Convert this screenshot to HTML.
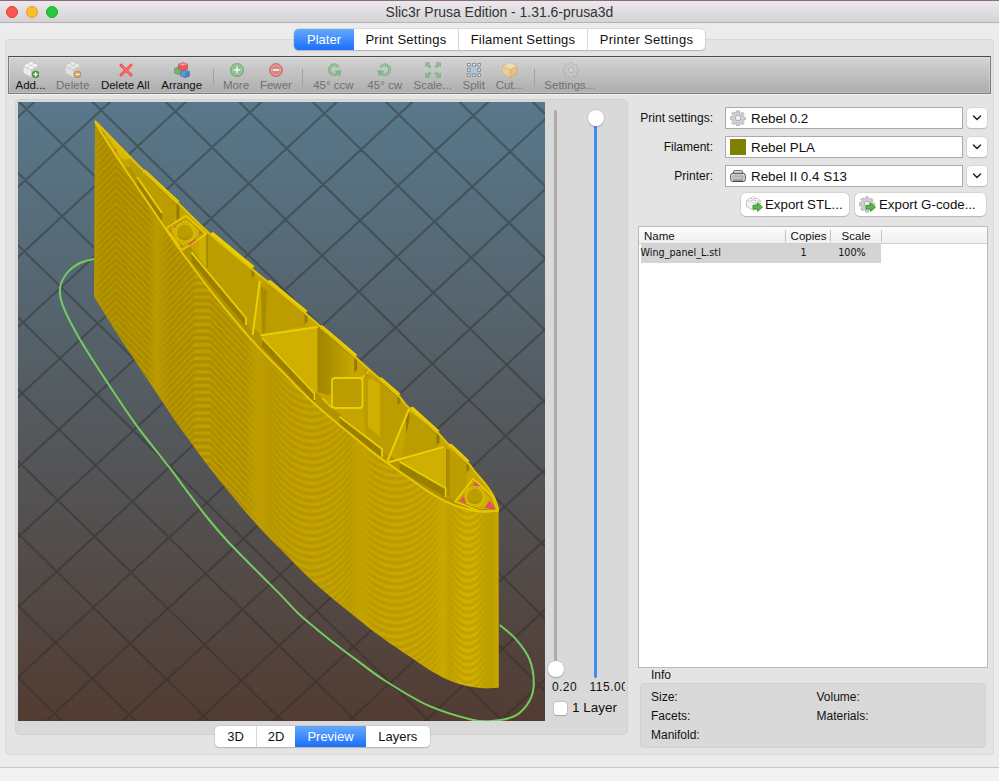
<!DOCTYPE html>
<html>
<head>
<meta charset="utf-8">
<title>Slic3r Prusa Edition - 1.31.6-prusa3d</title>
<style>
*{box-sizing:border-box;margin:0;padding:0}
html,body{width:999px;height:781px;overflow:hidden;background:#ececec;font-family:"Liberation Sans",sans-serif;color:#1a1a1a}
.abs{position:absolute}
#win{position:relative;width:999px;height:781px;background:#ececec;overflow:hidden}
#titlebar{left:0;top:0;width:999px;height:23px;background:linear-gradient(#ebe9eb,#d5d3d5);border-bottom:1px solid #b4b2b4;border-top:1px solid #8a6a7a}
#title{left:0;top:4px;width:999px;text-align:center;font-size:13.95px;color:#333}
.tl{width:12px;height:12px;border-radius:50%;top:6px}
#groupbox{left:5px;top:39px;width:989px;height:716px;background:#e4e4e4;border:1px solid #dadada;border-radius:4px}
#tabs{left:294px;top:29px;width:411px;height:21px;background:#fff;border-radius:4.5px;box-shadow:0 0 0 0.5px #c4c4c4,0 1px 1px rgba(0,0,0,.25);font-size:13px}
.tab{top:0;height:21px;line-height:21px;text-align:center;border-left:1px solid #d9d9d9;color:#111}
#toolbar{left:8px;top:56px;width:983px;height:38px;background:linear-gradient(#d4d4d4,#adadad);border:1px solid #7c7c7c;border-top-color:#4a4a4a;box-shadow:0 1px 0 #f3f3f3, inset 0 0 0 1px rgba(255,255,255,.25)}
.tbl{font-size:11.5px;line-height:14px;color:#111;text-align:center;white-space:nowrap}
.tbl.dis{color:#707070}
.sep{width:1px;height:16px;background:#a0a0a0}
#canvas{left:18px;top:102px;width:527px;height:619px;background:#555;overflow:hidden}

#leftshade{left:15px;top:99px;width:613px;height:636px;background:#d9d9d9;border:1px solid #d1d1d1;border-radius:5px}
.lbl{font-size:12px;line-height:14px;color:#111;text-align:right;white-space:nowrap}
.combo{background:#fff;border:1px solid #a9a9a9;height:22px;font-size:13.4px;line-height:20px;color:#111}
.dd{width:20px;height:20px;background:#fff;border-radius:4px;box-shadow:0 0 0 0.5px #c8c8c8,0 1px 1px rgba(0,0,0,.25)}
/*b*/.btn{height:23px;background:#fff;border-radius:5px;box-shadow:0 0 0 0.5px #c4c4c4,0 1px 1px rgba(0,0,0,.25);font-size:13.3px;line-height:24.5px;color:#111;white-space:nowrap}
#list{left:638px;top:226px;width:350px;height:442px;background:#fff;border:1px solid #b9b9b9}
#info{left:640px;top:683px;width:346px;height:65px;background:#d9d9d9;border-radius:4px;border:1px solid #d2d2d2}
.il{font-size:12px;line-height:14px;color:#111;white-space:nowrap}
.hd{font-size:11.500px;color:#111;white-space:nowrap;line-height:14px}
.rw{font-family:"DejaVu Sans Condensed","DejaVu Sans","Liberation Sans",sans-serif;font-size:10.700px;color:#111;white-space:nowrap;line-height:14px}
.knob{width:16px;height:16px;border-radius:50%;background:#fff;box-shadow:0 0 0 0.500px #bdbdbd,0 1px 1.500px rgba(0,0,0,.3)}
#status{left:0;top:767px;width:999px;height:14px;background:#f2f2f2;border-top:1px solid #c6c6c6}
#viewtabs{left:215px;top:726px;width:214.5px;height:21px;background:#fff;border-radius:4.5px;box-shadow:0 0 0 0.5px #c0c0c0,0 1px 1px rgba(0,0,0,.25);font-size:13px}
.vt{top:0;height:21px;line-height:21px;text-align:center;border-left:1px solid #d9d9d9;color:#111}
</style>
</head>
<body>
<div id="win">
  <div id="titlebar" class="abs"></div>
  <div class="abs tl" style="left:6px;background:#fc5753;border:0.5px solid #df3e3a"></div>
  <div class="abs tl" style="left:26px;background:#fdbc2e;border:0.5px solid #de9f1e"></div>
  <div class="abs tl" style="left:46px;background:#28c840;border:0.5px solid #1aab29"></div>
  <div id="title" class="abs">Slic3r Prusa Edition - 1.31.6-prusa3d</div>

  <div id="groupbox" class="abs"></div>

  <div id="tabs" class="abs">
    <div class="abs tab" style="left:0;width:60px;background:linear-gradient(#65a9fb,#1a6ffb);color:#fff;border-left:none;border-radius:4.5px 0 0 4.5px">Plater</div>
    <div class="abs tab" style="left:60px;width:104px;border-left:none;letter-spacing:0.28px">Print Settings</div>
    <div class="abs tab" style="left:164px;width:129px;letter-spacing:0.25px">Filament Settings</div>
    <div class="abs tab" style="left:293px;width:118px;letter-spacing:0.28px">Printer Settings</div>
  </div>

  <div id="toolbar" class="abs"></div>
  <!--TOOLBAR-ITEMS-START--><svg class="abs" style="left:23.0px;top:62px" width="16" height="16" viewBox="0 0 16 16"><g opacity="1.0"><path d="M0.5 4.6 L8 1 L15.3 4.6 L15.3 11 L8 14.8 L0.5 11 Z" fill="#ededed" stroke="#b4b4b4" stroke-width="0.6"/><path d="M8 8.4 L15.3 4.6 L15.3 11 L8 14.8 Z" fill="#c8c8c8"/><path d="M0.5 4.6 L8 8.4 L8 14.8 L0.5 11 Z" fill="#ebebeb"/><path d="M0.5 4.6 L8 8.4 L15.3 4.6" stroke="#cfcfcf" stroke-width="0.5" fill="none"/><path d="M5.7 2.8 v-1.3 a2.3 1.25 0 0 1 4.6 0 v1.3 a2.3 1.25 0 0 1 -4.6 0Z" fill="#cdcdcd"/><ellipse cx="8" cy="1.4999999999999998" rx="2.3" ry="1.25" fill="#fcfcfc"/><path d="M1.9000000000000004 4.8 v-1.3 a2.3 1.25 0 0 1 4.6 0 v1.3 a2.3 1.25 0 0 1 -4.6 0Z" fill="#cdcdcd"/><ellipse cx="4.2" cy="3.5" rx="2.3" ry="1.25" fill="#fcfcfc"/><path d="M9.5 4.8 v-1.3 a2.3 1.25 0 0 1 4.6 0 v1.3 a2.3 1.25 0 0 1 -4.6 0Z" fill="#cdcdcd"/><ellipse cx="11.8" cy="3.5" rx="2.3" ry="1.25" fill="#fcfcfc"/><path d="M5.7 6.8 v-1.3 a2.3 1.25 0 0 1 4.6 0 v1.3 a2.3 1.25 0 0 1 -4.6 0Z" fill="#cdcdcd"/><ellipse cx="8" cy="5.5" rx="2.3" ry="1.25" fill="#fcfcfc"/></g><circle cx="12.6" cy="12.4" r="3.4" fill="#45a835" stroke="#2c7d22" stroke-width="0.6"/><path d="M12.6 10.3V14.5M10.5 12.4H14.7" stroke="#fff" stroke-width="1.4"/></svg>
<div class="abs tbl" style="left:-9.5px;width:80px;top:78px">Add...</div>
<svg class="abs" style="left:65.0px;top:62px" width="16" height="16" viewBox="0 0 16 16"><g opacity="0.7"><path d="M0.5 4.6 L8 1 L15.3 4.6 L15.3 11 L8 14.8 L0.5 11 Z" fill="#ededed" stroke="#b4b4b4" stroke-width="0.6"/><path d="M8 8.4 L15.3 4.6 L15.3 11 L8 14.8 Z" fill="#c8c8c8"/><path d="M0.5 4.6 L8 8.4 L8 14.8 L0.5 11 Z" fill="#ebebeb"/><path d="M0.5 4.6 L8 8.4 L15.3 4.6" stroke="#cfcfcf" stroke-width="0.5" fill="none"/><path d="M5.7 2.8 v-1.3 a2.3 1.25 0 0 1 4.6 0 v1.3 a2.3 1.25 0 0 1 -4.6 0Z" fill="#cdcdcd"/><ellipse cx="8" cy="1.4999999999999998" rx="2.3" ry="1.25" fill="#fcfcfc"/><path d="M1.9000000000000004 4.8 v-1.3 a2.3 1.25 0 0 1 4.6 0 v1.3 a2.3 1.25 0 0 1 -4.6 0Z" fill="#cdcdcd"/><ellipse cx="4.2" cy="3.5" rx="2.3" ry="1.25" fill="#fcfcfc"/><path d="M9.5 4.8 v-1.3 a2.3 1.25 0 0 1 4.6 0 v1.3 a2.3 1.25 0 0 1 -4.6 0Z" fill="#cdcdcd"/><ellipse cx="11.8" cy="3.5" rx="2.3" ry="1.25" fill="#fcfcfc"/><path d="M5.7 6.8 v-1.3 a2.3 1.25 0 0 1 4.6 0 v1.3 a2.3 1.25 0 0 1 -4.6 0Z" fill="#cdcdcd"/><ellipse cx="8" cy="5.5" rx="2.3" ry="1.25" fill="#fcfcfc"/></g><g opacity="0.75"><circle cx="12.6" cy="12.4" r="3.4" fill="#e8913c" stroke="#c06a1c" stroke-width="0.6"/><path d="M10.5 12.4H14.7" stroke="#fff" stroke-width="1.4"/></g></svg>
<div class="abs tbl dis" style="left:32.7px;width:80px;top:78px">Delete</div>
<svg class="abs" style="left:117.7px;top:62px" width="16" height="16" viewBox="0 0 16 16"><path d="M3 3.2 L13 13 M13 3.2 L3 13" stroke="#f04848" stroke-width="3" stroke-linecap="round"/><path d="M3 3.2 L13 13 M13 3.2 L3 13" stroke="#ff7a7a" stroke-width="1.1" stroke-linecap="round"/></svg>
<div class="abs tbl" style="left:85.2px;width:80px;top:78px">Delete All</div>
<svg class="abs" style="left:173.8px;top:62px" width="16" height="16" viewBox="0 0 16 16"><g stroke-width="0.6"><path d="M0.5 6.5 L4 5 L8 6.5 L8 11 L4.5 12.5 L0.5 11 Z" fill="#74b870" stroke="#4b8f47"/><path d="M6.5 9.5 L11 8 L15.5 9.5 L15.5 14 L11 15.7 L6.5 14 Z" fill="#5d95d6" stroke="#3a6fb0"/><path d="M11 11.3 L15.5 9.5 L15.5 14 L11 15.7 Z" fill="#4a80c4"/><path d="M4.5 2.2 L9 0.6 L13.5 2.2 L13.5 7 L9 8.8 L4.5 7 Z" fill="#ee5a5a" stroke="#c03a3a"/><path d="M4.5 2.2 L9 4 L13.5 2.2 L9 0.6 Z" fill="#f78a8a"/><ellipse cx="9" cy="2.3" rx="2" ry="0.9" fill="#fbb" stroke="#d55" stroke-width="0.4"/></g></svg>
<div class="abs tbl" style="left:141.7px;width:80px;top:78px">Arrange</div>
<svg class="abs" style="left:228.8px;top:62px" width="16" height="16" viewBox="0 0 16 16"><g opacity="0.6"><circle cx="8" cy="8" r="6.6" fill="#5cb85c" stroke="#3a8e3a" stroke-width="0.8"/><circle cx="8" cy="8" r="4.6" fill="none" stroke="#b9e2b9" stroke-width="0.6"/><path d="M8 4.8V11.2M4.8 8H11.2" stroke="#fff" stroke-width="2"/></g></svg>
<div class="abs tbl dis" style="left:196.0px;width:80px;top:78px">More</div>
<svg class="abs" style="left:267.7px;top:62px" width="16" height="16" viewBox="0 0 16 16"><g opacity="0.6"><circle cx="8" cy="8" r="6.6" fill="#e8554d" stroke="#c43a33" stroke-width="0.8"/><circle cx="8" cy="8" r="4.6" fill="none" stroke="#f6b9b5" stroke-width="0.6"/><path d="M4.8 8H11.2" stroke="#fff" stroke-width="2"/></g></svg>
<div class="abs tbl dis" style="left:235.9px;width:80px;top:78px">Fewer</div>
<svg class="abs" style="left:325.6px;top:62px" width="16" height="16" viewBox="0 0 16 16"><g opacity="0.55"><path d="M12.6 5.2 A5 5 0 1 0 13 9.5" fill="none" stroke="#3f9a3f" stroke-width="2.8"/><path d="M12.6 5.2 A5 5 0 1 0 13 9.5" fill="none" stroke="#7ccf7c" stroke-width="1.2"/><path d="M9.2 9.2 L15.2 8.4 L13.8 14 Z" fill="#55b055" stroke="#3f9a3f" stroke-width="0.6"/></g></svg>
<div class="abs tbl dis" style="left:293.4px;width:80px;top:78px">45° ccw</div>
<svg class="abs" style="left:377.0px;top:62px" width="16" height="16" viewBox="0 0 16 16"><g opacity="0.55" transform="translate(16,0) scale(-1,1)"><path d="M12.6 5.2 A5 5 0 1 0 13 9.5" fill="none" stroke="#3f9a3f" stroke-width="2.8"/><path d="M12.6 5.2 A5 5 0 1 0 13 9.5" fill="none" stroke="#7ccf7c" stroke-width="1.2"/><path d="M9.2 9.2 L15.2 8.4 L13.8 14 Z" fill="#55b055" stroke="#3f9a3f" stroke-width="0.6"/></g></svg>
<div class="abs tbl dis" style="left:344.7px;width:80px;top:78px">45° cw</div>
<svg class="abs" style="left:424.7px;top:62px" width="16" height="16" viewBox="0 0 16 16"><g opacity="0.6" fill="#5cb85c" stroke="#3f9a3f" stroke-width="0.5"><path d="M0.5 0.5 L5 0.5 L3.6 1.9 L6.2 4.5 L4.5 6.2 L1.9 3.6 L0.5 5 Z"/><path d="M15.5 0.5 L15.5 5 L14.1 3.6 L11.5 6.2 L9.8 4.5 L12.4 1.9 L11 0.5 Z"/><path d="M0.5 15.5 L0.5 11 L1.9 12.4 L4.5 9.8 L6.2 11.5 L3.6 14.1 L5 15.5 Z"/><path d="M15.5 15.5 L11 15.5 L12.4 14.1 L9.8 11.5 L11.5 9.8 L14.1 12.4 L15.5 11 Z"/></g></svg>
<div class="abs tbl dis" style="left:392.7px;width:80px;top:78px">Scale...</div>
<svg class="abs" style="left:466.0px;top:62px" width="16" height="16" viewBox="0 0 16 16"><g opacity="0.7"><rect x="3" y="3" width="10" height="10" fill="#a9c3e8" stroke="#7d9fd0" stroke-width="0.8" stroke-dasharray="1.5 1"/><g fill="#f2f2f2" stroke="#555" stroke-width="0.7"><rect x="1.5" y="1.5" width="2.6" height="2.6"/><rect x="6.7" y="1.5" width="2.6" height="2.6"/><rect x="11.9" y="1.5" width="2.6" height="2.6"/><rect x="1.5" y="6.7" width="2.6" height="2.6"/><rect x="11.9" y="6.7" width="2.6" height="2.6"/><rect x="1.5" y="11.9" width="2.6" height="2.6"/><rect x="6.7" y="11.9" width="2.6" height="2.6"/><rect x="11.9" y="11.9" width="2.6" height="2.6"/></g></g></svg>
<div class="abs tbl dis" style="left:433.7px;width:80px;top:78px">Split</div>
<svg class="abs" style="left:502.0px;top:62px" width="16" height="16" viewBox="0 0 16 16"><g opacity="0.7"><path d="M8 0.8 L15.2 4.2 L15.2 11.6 L8 15.4 L0.8 11.6 L0.8 4.2 Z" fill="#f3c06a" stroke="#d89a36" stroke-width="0.8"/><path d="M0.8 4.2 L8 7.8 L15.2 4.2 L8 0.8 Z" fill="#fbe3b0"/><path d="M8 7.8 L8 15.4 L0.8 11.6 L0.8 4.2 Z" fill="#f9d48e"/><path d="M0.8 4.2 L8 7.8 L15.2 4.2 M8 7.8V15.4" stroke="#e0a84a" stroke-width="0.7" fill="none"/></g></svg>
<div class="abs tbl dis" style="left:469.4px;width:80px;top:78px">Cut...</div>
<svg class="abs" style="left:562.7px;top:62px" width="16" height="16" viewBox="0 0 16 16"><g opacity="0.55"><path d="M6.8 0.8h2.4l.4 2 1.3.55 1.7-1.15 1.7 1.7-1.15 1.7.55 1.3 2 .4v2.4l-2 .4-.55 1.3 1.15 1.7-1.7 1.7-1.7-1.15-1.3.55-.4 2H6.800l-.4-2-1.3-.55-1.700 1.150-1.700-1.700 1.150-1.700-.55-1.300-2-.4V6.800l2-.4.55-1.300L1.700 3.400l1.700-1.700 1.700 1.150 1.300-.55z" fill="#c9c9c9" stroke="#8a8a8a" stroke-width="0.7" stroke-dasharray="1.2 0.6"/><circle cx="8" cy="8" r="2.6" fill="#dcdcdc" stroke="#8a8a8a" stroke-width="0.7"/></g></svg>
<div class="abs tbl dis" style="left:529.9px;width:80px;top:78px">Settings...</div>
<div class="abs sep" style="left:212.9px;top:68.500px"></div>
<div class="abs sep" style="left:301.9px;top:68.500px"></div>
<div class="abs sep" style="left:533.9px;top:68.500px"></div><!--TOOLBAR-ITEMS-END-->

  <div id="leftshade" class="abs"></div>
  <div id="canvas" class="abs"><!--SCENE-START--><svg class="abs" style="left:0;top:0" width="527" height="619" viewBox="0 0 527 619">
<defs><linearGradient id="bg" x1="0" y1="0" x2="0" y2="1"><stop offset="0" stop-color="#58788b"/><stop offset="0.5" stop-color="#545a5f"/><stop offset="1" stop-color="#523c32"/></linearGradient>
<linearGradient id="front" gradientUnits="userSpaceOnUse" x1="77" y1="0" x2="481" y2="0"><stop offset="0" stop-color="#b89700"/><stop offset="0.35" stop-color="#c19f00"/><stop offset="0.8" stop-color="#c8a700"/><stop offset="0.94" stop-color="#d2b100"/><stop offset="1" stop-color="#caa900"/></linearGradient>
</defs>
<rect width="527" height="619" fill="url(#bg)"/>
<path d="M-1476.8 -298.3L725.2 1864.7M-1439.0 -333.3L763.0 1829.7M-1401.2 -368.3L800.8 1794.7M-1363.5 -403.2L838.5 1759.8M-1325.7 -438.2L876.3 1724.8M-1287.9 -473.2L914.1 1689.8M-1250.1 -508.2L951.9 1654.8M-1212.3 -543.2L989.7 1619.8M-1174.6 -578.1L1027.4 1584.9M-1136.8 -613.1L1065.2 1549.9M-1099.0 -648.1L1103.0 1514.9M-1061.2 -683.1L1140.8 1479.9M-1023.4 -718.1L1178.6 1444.9M-985.7 -753.0L1216.3 1410.0M-947.9 -788.0L1254.1 1375.0M-910.1 -823.0L1291.9 1340.0M-872.3 -858.0L1329.7 1305.0M-834.5 -893.0L1367.5 1270.0M-796.8 -927.9L1405.2 1235.1M-759.0 -962.9L1443.0 1200.1M-721.2 -997.9L1480.8 1165.1M-683.4 -1032.9L1518.6 1130.1M-645.6 -1067.9L1556.4 1095.1M-607.9 -1102.8L1594.1 1060.2M-570.1 -1137.8L1631.9 1025.2M-532.3 -1172.8L1669.7 990.2M-494.5 -1207.8L1707.5 955.2M-456.7 -1242.8L1745.3 920.2M-419.0 -1277.7L1783.0 885.3M-381.2 -1312.7L1820.8 850.3M-343.4 -1347.7L1858.6 815.3M-305.6 -1382.7L1896.4 780.3M-267.8 -1417.7L1934.2 745.3M-230.1 -1452.6L1971.9 710.4M-192.3 -1487.6L2009.7 675.4M-154.5 -1522.6L2047.5 640.4M-116.7 -1557.6L2085.3 605.4M-78.9 -1592.6L2123.1 570.4M-41.2 -1627.5L2160.8 535.5M-3.4 -1662.5L2198.6 500.5M-1487.6 412.0L779.2 -1686.8M-1450.9 448.0L815.9 -1650.7M-1414.2 484.1L852.6 -1614.7M-1377.5 520.1L889.3 -1578.6M-1340.8 556.2L926.0 -1542.6M-1304.1 592.2L962.7 -1506.5M-1267.4 628.3L999.4 -1470.5M-1230.7 664.3L1036.1 -1434.4M-1194.0 700.4L1072.8 -1398.4M-1157.3 736.4L1109.5 -1362.3M-1120.6 772.5L1146.2 -1326.3M-1083.9 808.5L1182.9 -1290.2M-1047.2 844.6L1219.6 -1254.2M-1010.5 880.6L1256.3 -1218.1M-973.8 916.7L1293.0 -1182.1M-937.1 952.7L1329.7 -1146.0M-900.4 988.8L1366.4 -1110.0M-863.7 1024.8L1403.1 -1073.9M-827.0 1060.9L1439.8 -1037.9M-790.3 1096.9L1476.5 -1001.8M-753.6 1133.0L1513.2 -965.8M-716.9 1169.0L1549.9 -929.7M-680.2 1205.1L1586.6 -893.7M-643.5 1241.1L1623.3 -857.6M-606.8 1277.2L1660.0 -821.6M-570.1 1313.2L1696.7 -785.5M-533.4 1349.3L1733.4 -749.5M-496.7 1385.3L1770.1 -713.4M-460.0 1421.4L1806.8 -677.4M-423.3 1457.4L1843.5 -641.3M-386.6 1493.5L1880.2 -605.3M-349.9 1529.5L1916.9 -569.2M-313.2 1565.6L1953.6 -533.2M-276.5 1601.6L1990.3 -497.1M-239.8 1637.7L2027.0 -461.1M-203.1 1673.8L2063.7 -425.0M-166.4 1709.8L2100.4 -389.0M-129.7 1745.8L2137.1 -352.9M-93.0 1781.9L2173.8 -316.9M-56.3 1817.9L2210.5 -280.8" stroke="#2b2b2b" stroke-opacity="0.42" stroke-width="2.1" fill="none"/>
<path d="M76.0 157.0 C73.7 157.7 66.5 158.7 62.0 161.0 C57.5 163.3 52.3 166.8 49.0 171.0 C45.7 175.2 42.7 180.6 42.0 186.0 C41.3 191.4 41.5 195.0 44.8 203.6 C48.1 212.2 54.3 224.3 62.0 237.5 C69.7 250.7 81.2 268.1 90.8 282.7 C100.4 297.3 109.4 311.0 119.6 324.9 C129.8 338.8 143.4 355.0 152.0 366.2 C160.6 377.4 164.8 383.6 171.2 392.1 C177.6 400.6 184.0 409.1 190.4 417.0 C196.8 424.9 201.0 430.0 209.6 439.2 C218.2 448.4 233.4 463.5 242.0 472.2 C250.6 480.9 254.8 484.9 261.2 491.4 C267.6 497.9 274.0 505.4 280.4 511.5 C286.8 517.6 293.2 522.6 299.6 527.9 C306.0 533.2 312.4 538.2 318.8 543.2 C325.2 548.2 330.1 551.8 338.0 557.6 C345.9 563.4 354.0 570.4 366.0 578.0 C378.0 585.6 395.3 596.8 410.0 603.4 C424.7 610.0 443.0 615.1 454.0 617.7 C465.0 620.3 468.7 619.5 476.0 618.8 C483.3 618.1 492.1 616.6 498.0 613.3 C503.9 610.0 508.4 604.3 511.4 599.0 C514.4 593.7 515.8 588.3 515.8 581.3 C515.8 574.3 514.4 564.3 511.4 557.0 C508.4 549.7 503.0 543.0 498.0 537.3 C493.1 531.6 484.4 525.4 481.7 523.0" stroke="#74cc60" stroke-width="2" fill="none"/>
<path d="M77.0 19.0 C85.2 27.3 112.2 55.3 126.0 69.0 C139.8 82.7 149.0 90.5 160.0 101.0 C171.0 111.5 179.7 121.0 192.0 132.0 C204.3 143.0 224.3 159.0 234.0 167.0 C243.7 175.0 241.2 172.7 250.0 180.0 C258.8 187.3 278.3 203.7 287.0 211.0 C295.7 218.3 293.8 216.8 302.0 224.0 C310.2 231.2 326.0 245.2 336.0 254.0 C346.0 262.8 354.7 270.5 362.0 277.0 C369.3 283.5 375.2 288.2 380.0 293.0 C384.8 297.8 384.5 299.8 391.0 306.0 C397.5 312.2 412.3 323.8 419.0 330.0 C425.7 336.2 425.8 337.8 431.0 343.0 C436.2 348.2 445.5 356.3 450.0 361.0 C454.5 365.7 454.8 367.2 458.0 371.0 C461.2 374.8 466.0 380.0 469.0 384.0 C472.0 388.0 474.1 391.1 476.0 395.0 C477.9 398.9 479.8 405.6 480.6 407.7 L480.8 585.7 L480.6 585.7 C477.7 585.8 469.3 586.5 463.0 586.0 C456.7 585.5 449.0 584.0 443.0 582.4 C437.0 580.8 432.5 579.1 427.0 576.5 C421.5 573.9 415.8 570.6 410.0 567.0 C404.2 563.4 397.6 558.6 392.0 554.8 C386.4 551.0 382.2 548.2 376.4 544.2 C370.6 540.2 363.6 535.5 357.2 530.7 C350.8 525.9 344.4 520.5 338.0 515.4 C331.6 510.3 325.2 505.3 318.8 500.0 C312.4 494.7 306.0 489.5 299.6 483.7 C293.2 477.9 286.4 471.4 280.4 465.4 C274.4 459.4 268.8 453.5 263.4 448.0 C258.0 442.5 253.8 438.5 248.0 432.4 C242.2 426.3 235.2 418.6 228.8 411.3 C222.4 403.9 216.0 396.1 209.6 388.3 C203.2 380.5 196.8 372.6 190.4 364.3 C184.0 356.0 176.6 345.7 171.2 338.3 C165.8 330.9 163.4 327.9 158.0 320.1 C152.6 312.3 145.2 300.9 138.8 291.3 C132.4 281.7 126.0 272.1 119.6 262.5 C113.2 252.9 106.8 243.6 100.4 233.7 C94.0 223.8 85.3 209.6 81.2 203.0 C77.1 196.4 76.9 195.8 76.0 194.3 Z" fill="url(#front)"/>
<clipPath id="fc"><path d="M77.0 19.0 C85.2 27.3 112.2 55.3 126.0 69.0 C139.8 82.7 149.0 90.5 160.0 101.0 C171.0 111.5 179.7 121.0 192.0 132.0 C204.3 143.0 224.3 159.0 234.0 167.0 C243.7 175.0 241.2 172.7 250.0 180.0 C258.8 187.3 278.3 203.7 287.0 211.0 C295.7 218.3 293.8 216.8 302.0 224.0 C310.2 231.2 326.0 245.2 336.0 254.0 C346.0 262.8 354.7 270.5 362.0 277.0 C369.3 283.5 375.2 288.2 380.0 293.0 C384.8 297.8 384.5 299.8 391.0 306.0 C397.5 312.2 412.3 323.8 419.0 330.0 C425.7 336.2 425.8 337.8 431.0 343.0 C436.2 348.2 445.5 356.3 450.0 361.0 C454.5 365.7 454.8 367.2 458.0 371.0 C461.2 374.8 466.0 380.0 469.0 384.0 C472.0 388.0 474.1 391.1 476.0 395.0 C477.9 398.9 479.8 405.6 480.6 407.7 L480.8 585.7 L480.6 585.7 C477.7 585.8 469.3 586.5 463.0 586.0 C456.7 585.5 449.0 584.0 443.0 582.4 C437.0 580.8 432.5 579.1 427.0 576.5 C421.5 573.9 415.8 570.6 410.0 567.0 C404.2 563.4 397.6 558.6 392.0 554.8 C386.4 551.0 382.2 548.2 376.4 544.2 C370.6 540.2 363.6 535.5 357.2 530.7 C350.8 525.9 344.4 520.5 338.0 515.4 C331.6 510.3 325.2 505.3 318.8 500.0 C312.4 494.7 306.0 489.5 299.6 483.7 C293.2 477.9 286.4 471.4 280.4 465.4 C274.4 459.4 268.8 453.5 263.4 448.0 C258.0 442.5 253.8 438.5 248.0 432.4 C242.2 426.3 235.2 418.6 228.8 411.3 C222.4 403.9 216.0 396.1 209.6 388.3 C203.2 380.5 196.8 372.6 190.4 364.3 C184.0 356.0 176.6 345.7 171.2 338.3 C165.8 330.9 163.4 327.9 158.0 320.1 C152.6 312.3 145.2 300.9 138.8 291.3 C132.4 281.7 126.0 272.1 119.6 262.5 C113.2 252.9 106.8 243.6 100.4 233.7 C94.0 223.8 85.3 209.6 81.2 203.0 C77.1 196.4 76.9 195.8 76.0 194.3 Z"/></clipPath><g clip-path="url(#fc)" fill="none">
<linearGradient id="mg0" gradientUnits="userSpaceOnUse" x1="75" y1="0" x2="139" y2="0"><stop offset="0" stop-color="#8a7000" stop-opacity="0"/><stop offset="0.14" stop-color="#8a7000" stop-opacity="0.33"/><stop offset="0.86" stop-color="#8a7000" stop-opacity="0.33"/><stop offset="1" stop-color="#8a7000" stop-opacity="0"/></linearGradient>
<path d="M75 -30.9L98 -53.9L139 -12.9M75 -24.3L98 -47.3L139 -6.3M75 -17.7L98 -40.7L139 0.3M75 -11.1L98 -34.1L139 6.9M75 -4.5L98 -27.5L139 13.5M75 2.1L98 -20.9L139 20.1M75 8.7L98 -14.3L139 26.7M75 15.3L98 -7.7L139 33.3M75 21.9L98 -1.1L139 39.9M75 28.5L98 5.5L139 46.5M75 35.1L98 12.1L139 53.1M75 41.7L98 18.7L139 59.7M75 48.3L98 25.3L139 66.3M75 54.9L98 31.9L139 72.9M75 61.5L98 38.5L139 79.5M75 68.1L98 45.1L139 86.1M75 74.7L98 51.7L139 92.7M75 81.3L98 58.3L139 99.3M75 87.9L98 64.9L139 105.9M75 94.5L98 71.5L139 112.5M75 101.1L98 78.1L139 119.1M75 107.7L98 84.7L139 125.7M75 114.3L98 91.3L139 132.3M75 120.9L98 97.9L139 138.9M75 127.5L98 104.5L139 145.5M75 134.1L98 111.1L139 152.1M75 140.7L98 117.7L139 158.7M75 147.3L98 124.3L139 165.3M75 153.9L98 130.9L139 171.9M75 160.5L98 137.5L139 178.5M75 167.1L98 144.1L139 185.1M75 173.7L98 150.7L139 191.7M75 180.3L98 157.3L139 198.3M75 186.9L98 163.9L139 204.9M75 193.5L98 170.5L139 211.5M75 200.1L98 177.1L139 218.1M75 206.7L98 183.7L139 224.7M75 213.3L98 190.3L139 231.3M75 219.9L98 196.9L139 237.9M75 226.5L98 203.5L139 244.5M75 233.1L98 210.1L139 251.1M75 239.7L98 216.7L139 257.7M75 246.3L98 223.3L139 264.3M75 252.9L98 229.9L139 270.9M75 259.5L98 236.5L139 277.5M75 266.1L98 243.1L139 284.1M75 272.7L98 249.7L139 290.7M75 279.3L98 256.3L139 297.3M75 285.9L98 262.9L139 303.9M75 292.5L98 269.5L139 310.5M75 299.1L98 276.1L139 317.1M75 305.7L98 282.7L139 323.7M75 312.3L98 289.3L139 330.3M75 318.9L98 295.9L139 336.9M75 325.5L98 302.5L139 343.5M75 332.1L98 309.1L139 350.1M75 338.7L98 315.7L139 356.7M75 345.3L98 322.3L139 363.3M75 351.9L98 328.9L139 369.9M75 358.5L98 335.5L139 376.5M75 365.1L98 342.1L139 383.1M75 371.7L98 348.7L139 389.7M75 378.3L98 355.3L139 396.3" stroke="url(#mg0)" stroke-width="3.30"/>
<linearGradient id="mg1" gradientUnits="userSpaceOnUse" x1="137" y1="0" x2="242" y2="0"><stop offset="0" stop-color="#8a7000" stop-opacity="0"/><stop offset="0.14" stop-color="#8a7000" stop-opacity="0.33"/><stop offset="0.86" stop-color="#8a7000" stop-opacity="0.33"/><stop offset="1" stop-color="#8a7000" stop-opacity="0"/></linearGradient>
<path d="M137 83.1L176 42.1L192 42.1L242 94.6M137 89.9L176 48.9L192 48.9L242 101.4M137 96.7L176 55.7L192 55.7L242 108.2M137 103.5L176 62.5L192 62.5L242 115.0M137 110.3L176 69.3L192 69.3L242 121.8M137 117.1L176 76.1L192 76.1L242 128.6M137 123.9L176 82.9L192 82.9L242 135.4M137 130.7L176 89.7L192 89.7L242 142.2M137 137.5L176 96.5L192 96.5L242 149.0M137 144.3L176 103.3L192 103.3L242 155.8M137 151.1L176 110.1L192 110.1L242 162.6M137 157.9L176 116.9L192 116.9L242 169.4M137 164.7L176 123.7L192 123.7L242 176.2M137 171.5L176 130.5L192 130.5L242 183.0M137 178.3L176 137.3L192 137.3L242 189.8M137 185.1L176 144.1L192 144.1L242 196.6M137 191.9L176 150.9L192 150.9L242 203.4M137 198.7L176 157.7L192 157.7L242 210.2M137 205.5L176 164.5L192 164.5L242 217.0M137 212.3L176 171.3L192 171.3L242 223.8M137 219.1L176 178.1L192 178.1L242 230.6M137 225.9L176 184.9L192 184.9L242 237.4M137 232.7L176 191.7L192 191.7L242 244.2M137 239.5L176 198.5L192 198.5L242 251.0M137 246.3L176 205.3L192 205.3L242 257.8M137 253.1L176 212.1L192 212.1L242 264.6M137 259.9L176 218.9L192 218.9L242 271.4M137 266.7L176 225.7L192 225.7L242 278.2M137 273.5L176 232.5L192 232.5L242 285.0M137 280.3L176 239.3L192 239.3L242 291.8M137 287.1L176 246.1L192 246.1L242 298.6M137 293.9L176 252.9L192 252.9L242 305.4M137 300.7L176 259.7L192 259.7L242 312.2M137 307.5L176 266.5L192 266.5L242 319.0M137 314.3L176 273.3L192 273.3L242 325.8M137 321.1L176 280.1L192 280.1L242 332.6M137 327.9L176 286.9L192 286.9L242 339.4M137 334.7L176 293.7L192 293.7L242 346.2M137 341.5L176 300.5L192 300.5L242 353.0M137 348.3L176 307.3L192 307.3L242 359.8M137 355.1L176 314.1L192 314.1L242 366.6M137 361.9L176 320.9L192 320.9L242 373.4M137 368.7L176 327.7L192 327.7L242 380.2M137 375.5L176 334.5L192 334.5L242 387.0M137 382.3L176 341.3L192 341.3L242 393.8M137 389.1L176 348.1L192 348.1L242 400.6M137 395.9L176 354.9L192 354.9L242 407.4M137 402.7L176 361.7L192 361.7L242 414.2M137 409.5L176 368.5L192 368.5L242 421.0M137 416.3L176 375.3L192 375.3L242 427.8M137 423.1L176 382.1L192 382.1L242 434.6M137 429.9L176 388.9L192 388.9L242 441.4M137 436.7L176 395.7L192 395.7L242 448.2M137 443.5L176 402.5L192 402.5L242 455.0M137 450.3L176 409.3L192 409.3L242 461.8M137 457.1L176 416.1L192 416.1L242 468.6M137 463.9L176 422.9L192 422.9L242 475.4M137 470.7L176 429.7L192 429.7L242 482.2M137 477.5L176 436.5L192 436.5L242 489.0M137 484.3L176 443.3L192 443.3L242 495.8M137 491.1L176 450.1L192 450.1L242 502.6M137 497.9L176 456.9L192 456.9L242 509.4M137 504.7L176 463.7L192 463.7L242 516.2M137 511.5L176 470.5L192 470.5L242 523.0M137 518.3L176 477.3L192 477.3L242 529.8M137 525.1L176 484.1L192 484.1L242 536.6M137 531.9L176 490.9L192 490.9L242 543.4" stroke="url(#mg1)" stroke-width="3.40"/>
<linearGradient id="mg2" gradientUnits="userSpaceOnUse" x1="238" y1="0" x2="346" y2="0"><stop offset="0" stop-color="#8a7000" stop-opacity="0"/><stop offset="0.14" stop-color="#8a7000" stop-opacity="0.22"/><stop offset="0.86" stop-color="#8a7000" stop-opacity="0.22"/><stop offset="1" stop-color="#8a7000" stop-opacity="0"/></linearGradient>
<path d="M238 121.7Q292.0 224.3 346 129.0M238 128.7Q292.0 231.3 346 136.0M238 135.7Q292.0 238.3 346 143.0M238 142.7Q292.0 245.3 346 150.0M238 149.7Q292.0 252.3 346 157.0M238 156.7Q292.0 259.3 346 164.0M238 163.7Q292.0 266.3 346 171.0M238 170.7Q292.0 273.3 346 178.0M238 177.7Q292.0 280.3 346 185.0M238 184.7Q292.0 287.3 346 192.0M238 191.7Q292.0 294.3 346 199.0M238 198.7Q292.0 301.3 346 206.0M238 205.7Q292.0 308.3 346 213.0M238 212.7Q292.0 315.3 346 220.0M238 219.7Q292.0 322.3 346 227.0M238 226.7Q292.0 329.3 346 234.0M238 233.7Q292.0 336.3 346 241.0M238 240.7Q292.0 343.3 346 248.0M238 247.7Q292.0 350.3 346 255.0M238 254.7Q292.0 357.3 346 262.0M238 261.7Q292.0 364.3 346 269.0M238 268.7Q292.0 371.3 346 276.0M238 275.7Q292.0 378.3 346 283.0M238 282.7Q292.0 385.3 346 290.0M238 289.7Q292.0 392.3 346 297.0M238 296.7Q292.0 399.3 346 304.0M238 303.7Q292.0 406.3 346 311.0M238 310.7Q292.0 413.3 346 318.0M238 317.7Q292.0 420.3 346 325.0M238 324.7Q292.0 427.3 346 332.0M238 331.7Q292.0 434.3 346 339.0M238 338.7Q292.0 441.3 346 346.0M238 345.7Q292.0 448.3 346 353.0M238 352.7Q292.0 455.3 346 360.0M238 359.7Q292.0 462.3 346 367.0M238 366.7Q292.0 469.3 346 374.0M238 373.7Q292.0 476.3 346 381.0M238 380.7Q292.0 483.3 346 388.0M238 387.7Q292.0 490.3 346 395.0M238 394.7Q292.0 497.3 346 402.0M238 401.7Q292.0 504.3 346 409.0M238 408.7Q292.0 511.3 346 416.0M238 415.7Q292.0 518.3 346 423.0M238 422.7Q292.0 525.3 346 430.0M238 429.7Q292.0 532.3 346 437.0M238 436.7Q292.0 539.3 346 444.0M238 443.7Q292.0 546.3 346 451.0M238 450.7Q292.0 553.3 346 458.0M238 457.7Q292.0 560.3 346 465.0M238 464.7Q292.0 567.3 346 472.0M238 471.7Q292.0 574.3 346 479.0M238 478.7Q292.0 581.3 346 486.0M238 485.7Q292.0 588.3 346 493.0M238 492.7Q292.0 595.3 346 500.0M238 499.7Q292.0 602.3 346 507.0M238 506.7Q292.0 609.3 346 514.0M238 513.7Q292.0 616.3 346 521.0M238 520.7Q292.0 623.3 346 528.0M238 527.7Q292.0 630.3 346 535.0M238 534.7Q292.0 637.3 346 542.0" stroke="url(#mg2)" stroke-width="3.50"/>
<linearGradient id="mg3" gradientUnits="userSpaceOnUse" x1="342" y1="0" x2="428" y2="0"><stop offset="0" stop-color="#8a7000" stop-opacity="0"/><stop offset="0.14" stop-color="#8a7000" stop-opacity="0.2"/><stop offset="0.86" stop-color="#8a7000" stop-opacity="0.2"/><stop offset="1" stop-color="#8a7000" stop-opacity="0"/></linearGradient>
<path d="M342 252.6Q385.0 299.1 428 234.6M342 259.6Q385.0 306.1 428 241.6M342 266.6Q385.0 313.1 428 248.6M342 273.6Q385.0 320.1 428 255.6M342 280.6Q385.0 327.1 428 262.6M342 287.6Q385.0 334.1 428 269.6M342 294.6Q385.0 341.1 428 276.6M342 301.6Q385.0 348.1 428 283.6M342 308.6Q385.0 355.1 428 290.6M342 315.6Q385.0 362.1 428 297.6M342 322.6Q385.0 369.1 428 304.6M342 329.6Q385.0 376.1 428 311.6M342 336.6Q385.0 383.1 428 318.6M342 343.6Q385.0 390.1 428 325.6M342 350.6Q385.0 397.1 428 332.6M342 357.6Q385.0 404.1 428 339.6M342 364.6Q385.0 411.1 428 346.6M342 371.6Q385.0 418.1 428 353.6M342 378.6Q385.0 425.1 428 360.6M342 385.6Q385.0 432.1 428 367.6M342 392.6Q385.0 439.1 428 374.6M342 399.6Q385.0 446.1 428 381.6M342 406.6Q385.0 453.1 428 388.6M342 413.6Q385.0 460.1 428 395.6M342 420.6Q385.0 467.1 428 402.6M342 427.6Q385.0 474.1 428 409.6M342 434.6Q385.0 481.1 428 416.6M342 441.6Q385.0 488.1 428 423.6M342 448.6Q385.0 495.1 428 430.6M342 455.6Q385.0 502.1 428 437.6M342 462.6Q385.0 509.1 428 444.6M342 469.6Q385.0 516.1 428 451.6M342 476.6Q385.0 523.1 428 458.6M342 483.6Q385.0 530.1 428 465.6M342 490.6Q385.0 537.1 428 472.6M342 497.6Q385.0 544.1 428 479.6M342 504.6Q385.0 551.1 428 486.6M342 511.6Q385.0 558.1 428 493.6M342 518.6Q385.0 565.1 428 500.6M342 525.6Q385.0 572.1 428 507.6M342 532.6Q385.0 579.1 428 514.6M342 539.6Q385.0 586.1 428 521.6M342 546.6Q385.0 593.1 428 528.6M342 553.6Q385.0 600.1 428 535.6M342 560.6Q385.0 607.1 428 542.6M342 567.6Q385.0 614.1 428 549.6M342 574.6Q385.0 621.1 428 556.6M342 581.6Q385.0 628.1 428 563.6M342 588.6Q385.0 635.1 428 570.6M342 595.6Q385.0 642.1 428 577.6M342 602.6Q385.0 649.1 428 584.6M342 609.6Q385.0 656.1 428 591.6M342 616.6Q385.0 663.1 428 598.6M342 623.6Q385.0 670.1 428 605.6" stroke="url(#mg3)" stroke-width="3.50"/>
<linearGradient id="mg4" gradientUnits="userSpaceOnUse" x1="424" y1="0" x2="482" y2="0"><stop offset="0" stop-color="#8a7000" stop-opacity="0"/><stop offset="0.14" stop-color="#8a7000" stop-opacity="0.22"/><stop offset="0.86" stop-color="#8a7000" stop-opacity="0.22"/><stop offset="1" stop-color="#8a7000" stop-opacity="0"/></linearGradient>
<path d="M424 296.6Q453.0 367.3 482 280.3M424 303.6Q453.0 374.3 482 287.3M424 310.6Q453.0 381.3 482 294.3M424 317.6Q453.0 388.3 482 301.3M424 324.6Q453.0 395.3 482 308.3M424 331.6Q453.0 402.3 482 315.3M424 338.6Q453.0 409.3 482 322.3M424 345.6Q453.0 416.3 482 329.3M424 352.6Q453.0 423.3 482 336.3M424 359.6Q453.0 430.3 482 343.3M424 366.6Q453.0 437.3 482 350.3M424 373.6Q453.0 444.3 482 357.3M424 380.6Q453.0 451.3 482 364.3M424 387.6Q453.0 458.3 482 371.3M424 394.6Q453.0 465.3 482 378.3M424 401.6Q453.0 472.3 482 385.3M424 408.6Q453.0 479.3 482 392.3M424 415.6Q453.0 486.3 482 399.3M424 422.6Q453.0 493.3 482 406.3M424 429.6Q453.0 500.3 482 413.3M424 436.6Q453.0 507.3 482 420.3M424 443.6Q453.0 514.3 482 427.3M424 450.6Q453.0 521.3 482 434.3M424 457.6Q453.0 528.3 482 441.3M424 464.6Q453.0 535.3 482 448.3M424 471.6Q453.0 542.3 482 455.3M424 478.6Q453.0 549.3 482 462.3M424 485.6Q453.0 556.3 482 469.3M424 492.6Q453.0 563.3 482 476.3M424 499.6Q453.0 570.3 482 483.3M424 506.6Q453.0 577.3 482 490.3M424 513.6Q453.0 584.3 482 497.3M424 520.6Q453.0 591.3 482 504.3M424 527.6Q453.0 598.3 482 511.3M424 534.6Q453.0 605.3 482 518.3M424 541.6Q453.0 612.3 482 525.3M424 548.6Q453.0 619.3 482 532.3M424 555.6Q453.0 626.3 482 539.3M424 562.6Q453.0 633.3 482 546.3M424 569.6Q453.0 640.3 482 553.3M424 576.6Q453.0 647.3 482 560.3M424 583.6Q453.0 654.3 482 567.3M424 590.6Q453.0 661.3 482 574.3M424 597.6Q453.0 668.3 482 581.3M424 604.6Q453.0 675.3 482 588.3M424 611.6Q453.0 682.3 482 595.3M424 618.6Q453.0 689.3 482 602.3" stroke="url(#mg4)" stroke-width="3.50"/>
</g>
<path id="topface" d="M77.0 19.0 C85.2 27.3 112.2 55.3 126.0 69.0 C139.8 82.7 149.0 90.5 160.0 101.0 C171.0 111.5 179.7 121.0 192.0 132.0 C204.3 143.0 224.3 159.0 234.0 167.0 C243.7 175.0 241.2 172.7 250.0 180.0 C258.8 187.3 278.3 203.7 287.0 211.0 C295.7 218.3 293.8 216.8 302.0 224.0 C310.2 231.2 326.0 245.2 336.0 254.0 C346.0 262.8 354.7 270.5 362.0 277.0 C369.3 283.5 375.2 288.2 380.0 293.0 C384.8 297.8 384.5 299.8 391.0 306.0 C397.5 312.2 412.3 323.8 419.0 330.0 C425.7 336.2 425.8 337.8 431.0 343.0 C436.2 348.2 445.5 356.3 450.0 361.0 C454.5 365.7 454.8 367.2 458.0 371.0 C461.2 374.8 466.0 380.0 469.0 384.0 C472.0 388.0 474.1 391.1 476.0 395.0 C477.9 398.9 479.8 405.6 480.6 407.7 L480.6 408.5 C477.7 408.7 469.3 410.1 463.0 409.6 C456.7 409.1 449.0 407.2 443.0 405.5 C437.0 403.8 432.5 401.9 427.0 399.2 C421.5 396.5 415.8 393.1 410.0 389.3 C404.2 385.6 397.6 380.7 392.0 376.8 C386.4 372.9 382.2 370.0 376.4 365.9 C370.6 361.8 363.6 357.0 357.2 352.1 C350.8 347.2 344.4 341.7 338.0 336.5 C331.6 331.4 325.2 326.3 318.8 321.0 C312.4 315.6 306.0 310.3 299.6 304.5 C293.2 298.8 286.4 292.2 280.4 286.2 C274.4 280.2 268.8 274.3 263.4 268.8 C258.0 263.3 253.8 259.4 248.0 253.3 C242.2 247.2 235.2 239.6 228.8 232.3 C222.4 225.0 216.0 217.3 209.6 209.6 C203.2 201.8 196.8 194.1 190.4 185.8 C184.0 177.6 176.6 167.4 171.2 160.2 C165.8 152.9 163.4 149.9 158.0 142.2 C152.6 134.5 145.2 123.3 138.8 113.8 C132.4 104.4 126.0 94.9 119.6 85.5 C113.2 76.0 106.8 66.9 100.4 57.1 C94.0 47.4 85.1 33.2 81.2 26.9 C77.3 20.5 77.7 20.3 77.0 19.0 Z" fill="#c6a500"/>
<clipPath id="tc"><use href="#topface"/></clipPath><g clip-path="url(#tc)">
<polygon points="106.0,65.4 112.0,74.2 118.0,83.1 124.0,92.0 130.0,100.8 136.0,109.7 142.0,118.5 148.0,127.4 154.0,136.3 160.0,144.9 166.0,153.1 172.0,161.2 178.0,169.2 184.0,177.3 190.0,185.3 196.0,192.7 202.0,200.2 208.0,207.6 214.0,214.8 220.0,221.9 226.0,229.0 232.0,235.8 238.0,242.4 244.0,248.9 250.0,255.3 256.0,261.4 262.0,267.4 268.0,273.5 274.0,279.7 280.0,285.8 286.0,291.6 292.0,297.3 298.0,303.0 304.0,308.3 310.0,313.4 316.0,318.6 322.0,323.6 328.0,328.4 334.0,333.3 340.0,338.2 346.0,343.0 352.0,347.9 358.0,352.7 364.0,357.0 370.0,361.3 376.0,365.6 382.0,369.8 388.0,374.0 394.0,378.2 400.0,382.4 406.0,386.5 412.0,390.5 418.0,394.0 424.0,397.5 430.0,400.4 436.0,402.7 442.0,405.1 448.0,406.5 460.0,405.5 454.0,404.1 448.0,401.7 442.0,399.4 436.0,396.5 430.0,393.0 424.0,389.5 418.0,385.5 412.0,381.4 406.0,377.2 400.0,373.0 394.0,368.8 388.0,364.6 382.0,360.3 376.0,356.0 370.0,351.7 364.0,346.9 358.0,342.0 352.0,337.2 346.0,332.3 340.0,327.4 334.0,322.6 328.0,317.6 322.0,312.4 316.0,307.3 310.0,302.0 304.0,296.3 298.0,290.6 292.0,284.8 286.0,278.7 280.0,272.5 274.0,266.4 268.0,260.4 262.0,254.3 256.0,247.9 250.0,241.4 244.0,234.8 238.0,228.0 232.0,220.9 226.0,213.8 220.0,206.6 214.0,199.2 208.0,191.7 202.0,184.3 196.0,176.3 190.0,168.2 184.0,160.2 178.0,152.1 172.0,143.9 166.0,135.3 160.0,126.4 154.0,117.5 148.0,108.7 142.0,99.8 136.0,91.0 130.0,82.1 124.0,73.2 118.0,64.4" fill="#b09300" />
<polygon points="77.0,19.0 92.0,38.0 103.0,56.0 109.0,58.0 113.0,55.0" fill="#d8bb00" />
<polygon points="108.0,56.0 126.0,70.0 160.0,101.0 160.0,114.0 148.0,125.0 142.0,119.0" fill="#bb9d00" />
<polygon points="189.0,132.0 193.0,131.0 234.0,166.0 234.0,170.0 241.0,178.0 236.0,231.0 218.0,208.0 189.0,166.0" fill="#bb9d00" />
<polygon points="181.0,138.0 189.0,132.0 189.0,166.0 181.0,156.0" fill="#cfb000" />
<polygon points="243.0,180.0 250.0,179.5 287.0,210.0 287.0,224.0 244.0,232.0" fill="#bb9d00" />
<polygon points="243.0,185.0 249.0,189.0 247.0,231.0 244.0,232.0" fill="#a88c00" />
<polygon points="243.5,235.0 299.5,226.0 299.5,290.0 296.4,291.7" fill="#cfb000" />
<linearGradient id="cg1" gradientUnits="userSpaceOnUse" x1="299.0" y1="0" x2="335.0" y2="0"><stop offset="0" stop-color="#a08600"/><stop offset="0.25" stop-color="#a88c00"/><stop offset="1" stop-color="#c6a800"/></linearGradient>
<polygon points="299.5,226.0 301.0,224.5 336.7,254.0 336.7,270.0 327.0,276.0 314.0,277.5 314.0,294.0 299.5,290.0" fill="url(#cg1)" />
<polygon points="314.0,276.0 344.0,276.0 344.0,306.0 314.0,306.0" fill="#bb9d00" />
<polygon points="346.0,267.0 355.0,275.5 361.0,276.5 380.0,293.0 380.0,297.0 391.0,306.0 372.0,356.0 348.0,338.0 345.0,306.0" fill="#bb9d00" />
<polygon points="347.0,279.0 354.0,277.0 362.0,282.0 362.0,335.0 347.0,322.0" fill="#cfb000" />
<polygon points="347.0,279.0 350.0,278.0 350.0,325.0 347.0,322.0" fill="#bb9d00" />
<polygon points="388.0,309.0 391.5,311.0 391.5,353.0 388.0,350.0" fill="#957b00" />
<polygon points="393.0,310.0 419.0,331.0 419.0,345.0 382.0,357.0 391.5,318.0" fill="#bb9d00" />
<polygon points="383.0,360.0 428.0,346.0 429.0,387.0 402.0,372.0" fill="#cfb000" />
<polygon points="428.0,346.0 434.0,350.0 450.0,364.0 448.0,384.0 438.0,398.0 429.0,395.0" fill="#bb9d00" />
<polygon points="428.0,346.0 431.5,348.0 431.5,395.0 428.0,393.0" fill="#a88c00" />
<polygon points="437.0,399.0 455.0,377.0 480.6,409.0 462.0,410.0" fill="#bb9d00" />
<polygon points="119.0,75.0 144.0,111.0 144.0,120.0 119.0,84.0" fill="#9a8000" />
<polygon points="173.4,150.4 228.0,216.0 228.0,225.0 173.4,159.4" fill="#9a8000" />
<polygon points="244.0,236.0 296.4,291.7 296.4,300.7 244.0,245.0" fill="#9a8000" />
<polygon points="321.6,314.8 364.0,347.0 364.0,356.0 321.6,323.8" fill="#9a8000" />
<polygon points="381.5,359.8 427.6,386.2 427.6,395.2 381.5,368.8" fill="#9a8000" />
</g>
<polygon points="125.0,68.0 127.5,67.8 161.5,99.3 159.0,102.0 125.0,70.8" fill="#ebcf00" />
<polygon points="158.5,101.7 161.5,99.3 161.5,116.3 158.5,118.7" fill="#957b00" />
<polyline points="126.0,71.4 158.5,102.7" fill="none" stroke="#957b00" stroke-width="0.7" stroke-linejoin="round" />
<polygon points="193.0,130.5 195.5,130.3 236.5,164.3 234.0,167.0 193.0,133.3" fill="#ebcf00" />
<polygon points="233.5,166.7 236.5,164.3 236.5,173.3 233.5,175.7" fill="#957b00" />
<polyline points="194.0,133.9 233.5,167.7" fill="none" stroke="#957b00" stroke-width="0.7" stroke-linejoin="round" />
<polygon points="250.0,178.5 252.5,178.3 289.5,208.8 287.0,211.5 250.0,181.3" fill="#ebcf00" />
<polygon points="286.5,211.2 289.5,208.8 289.5,219.8 286.5,222.2" fill="#957b00" />
<polyline points="251.0,181.9 286.5,212.2" fill="none" stroke="#957b00" stroke-width="0.7" stroke-linejoin="round" />
<polygon points="302.0,223.5 304.5,223.3 339.2,252.8 336.7,255.5 302.0,226.3" fill="#ebcf00" />
<polygon points="336.2,255.2 339.2,252.8 339.2,267.8 336.2,270.2" fill="#957b00" />
<polyline points="303.0,226.9 336.2,256.2" fill="none" stroke="#957b00" stroke-width="0.7" stroke-linejoin="round" />
<polygon points="361.3,275.6 363.8,275.4 382.5,291.8 380.0,294.5 361.3,278.4" fill="#ebcf00" />
<polygon points="379.5,294.2 382.5,291.8 382.5,300.8 379.5,303.2" fill="#957b00" />
<polyline points="362.3,279.0 379.5,295.2" fill="none" stroke="#957b00" stroke-width="0.7" stroke-linejoin="round" />
<polygon points="392.5,305.0 395.0,304.8 421.5,328.8 419.0,331.5 392.5,307.8" fill="#ebcf00" />
<polygon points="418.5,331.2 421.5,328.8 421.5,340.8 418.5,343.2" fill="#957b00" />
<polyline points="393.5,308.4 418.5,332.2" fill="none" stroke="#957b00" stroke-width="0.7" stroke-linejoin="round" />
<polygon points="431.0,342.0 433.5,341.8 451.5,358.8 449.0,361.5 431.0,344.8" fill="#ebcf00" />
<polygon points="448.5,361.2 451.5,358.8 451.5,367.8 448.5,370.2" fill="#957b00" />
<polyline points="432.0,345.4 448.5,362.2" fill="none" stroke="#957b00" stroke-width="0.7" stroke-linejoin="round" />
<polyline points="119.0,75.0 144.0,111.0" fill="none" stroke="#ebcf00" stroke-width="1.8" stroke-linejoin="round" />
<polyline points="173.4,150.4 228.0,216.0 228.0,223.0" fill="none" stroke="#ebcf00" stroke-width="1.8" stroke-linejoin="round" />
<polyline points="244.0,236.0 296.4,291.7 296.4,298.0" fill="none" stroke="#ebcf00" stroke-width="1.5" stroke-linejoin="round" />
<polyline points="321.6,314.8 364.0,347.0 364.0,355.0" fill="none" stroke="#ebcf00" stroke-width="1.8" stroke-linejoin="round" />
<polyline points="381.5,359.8 427.6,386.2 427.6,395.0" fill="none" stroke="#ebcf00" stroke-width="1.6" stroke-linejoin="round" />
<polyline points="189.0,132.0 189.0,166.0" fill="none" stroke="#957b00" stroke-width="1.2" stroke-linejoin="round" />
<polyline points="241.8,179.0 234.6,233.0" fill="none" stroke="#ebcf00" stroke-width="2" stroke-linejoin="round" />
<polyline points="242.4,233.5 300.0,225.0" fill="none" stroke="#ebcf00" stroke-width="2" stroke-linejoin="round" />
<polyline points="391.0,307.0 369.5,359.0" fill="none" stroke="#ebcf00" stroke-width="2" stroke-linejoin="round" />
<polyline points="370.0,360.5 426.0,345.0" fill="none" stroke="#ebcf00" stroke-width="2" stroke-linejoin="round" />
<rect x="314" y="276" width="30.5" height="30" rx="3" fill="none" stroke="#ebcf00" stroke-width="1.8"/>
<polyline points="314.0,306.0 304.0,296.0" fill="none" stroke="#ebcf00" stroke-width="1.4" stroke-linejoin="round" />
<polyline points="344.0,276.0 351.0,269.0" fill="none" stroke="#ebcf00" stroke-width="1.4" stroke-linejoin="round" />
<polygon points="147.6,126.2 168.0,113.6 188.4,131.9 164.5,148.0" fill="#cdb000" stroke="#ebcf00" stroke-width="1.3" stroke-linejoin="round"/>
<polygon points="150.7,126.8 167.9,116.2 185.0,131.6 164.9,145.1" fill="none" stroke="#a88c00" stroke-width="0.8" stroke-linejoin="round"/>
<polygon points="151.5,129.0 153.5,126.5 153.2,131.0" fill="#e0506a" />
<polygon points="156.0,125.0 163.5,119.5 164.0,121.0 157.0,126.0" fill="#e0506a" />
<polygon points="181.0,129.0 184.0,130.5 181.5,133.5" fill="#e0506a" />
<polygon points="170.0,142.0 177.5,137.0 178.0,138.5 171.0,143.5" fill="#e0506a" />
<polygon points="161.0,143.0 165.0,144.5 163.5,146.0" fill="#e0506a" />
<circle cx="166.9" cy="130.5" r="10.6" fill="#ebcf00"/>
<circle cx="166.9" cy="130.5" r="9.4" fill="none" stroke="#a88c00" stroke-width="0.7"/>
<circle cx="166.9" cy="130.5" r="8.2" fill="#bb9d00"/>
<path d="M158.7 130.5 a8.2 8.2 0 0 0 16.4 0 a8.2 5.1 0 0 1 -16.4 0Z" fill="#a88c00" opacity="0.55"/>
<polygon points="455.0,376.5 437.0,399.5 462.0,409.5 480.0,409.0 474.0,394.0" fill="#cdb000" stroke="#ebcf00" stroke-width="1.3" stroke-linejoin="round"/>
<polygon points="456.1,379.9 440.9,399.2 461.9,407.6 477.1,407.2 472.0,394.6" fill="none" stroke="#a88c00" stroke-width="0.8" stroke-linejoin="round"/>
<polygon points="457.5,380.0 454.0,384.5 462.0,384.0" fill="#e0506a" />
<polygon points="442.0,399.0 446.5,393.5 448.0,401.5" fill="#e0506a" />
<polygon points="466.5,406.0 477.5,407.5 471.5,398.5" fill="#e0506a" />
<circle cx="456.8" cy="394.3" r="10.4" fill="#ebcf00"/>
<circle cx="456.8" cy="394.3" r="9.2" fill="none" stroke="#a88c00" stroke-width="0.7"/>
<circle cx="456.8" cy="394.3" r="8.0" fill="#bb9d00"/>
<path d="M448.8 394.3 a8.0 8.0 0 0 0 16.0 0 a8.0 5.0 0 0 1 -16.0 0Z" fill="#a88c00" opacity="0.55"/>
<polygon points="84.3,29.3 87.3,33.1 85.1,32.7" fill="#e0506a" />
<polygon points="96.3,45.8 99.3,49.6 97.1,49.2" fill="#e0506a" />
<polygon points="242.3,172.8 245.3,176.6 243.1,176.2" fill="#e0506a" />
<polygon points="346.8,270.3 349.8,274.1 347.6,273.7" fill="#e0506a" />
<polygon points="428.3,338.8 431.3,342.6 429.1,342.2" fill="#e0506a" />
<path d="M77.0 19.0 C77.7 20.3 77.3 20.5 81.2 26.9 C85.1 33.2 94.0 47.4 100.4 57.1 C106.8 66.9 113.2 76.0 119.6 85.5 C126.0 94.9 132.4 104.4 138.8 113.8 C145.2 123.3 152.6 134.5 158.0 142.2 C163.4 149.9 165.8 152.9 171.2 160.2 C176.6 167.4 184.0 177.6 190.4 185.8 C196.8 194.1 203.2 201.8 209.6 209.6 C216.0 217.3 222.4 225.0 228.8 232.3 C235.2 239.6 242.2 247.2 248.0 253.3 C253.8 259.4 258.0 263.3 263.4 268.8 C268.8 274.3 274.4 280.2 280.4 286.2 C286.4 292.2 293.2 298.8 299.6 304.5 C306.0 310.3 312.4 315.6 318.8 321.0 C325.2 326.3 331.6 331.4 338.0 336.5 C344.4 341.7 350.8 347.2 357.2 352.1 C363.6 357.0 370.6 361.8 376.4 365.9 C382.2 370.0 386.4 372.9 392.0 376.8 C397.6 380.7 404.2 385.6 410.0 389.3 C415.8 393.1 421.5 396.5 427.0 399.2 C432.5 401.9 437.0 403.8 443.0 405.5 C449.0 407.2 456.7 409.1 463.0 409.6 C469.3 410.1 477.7 408.7 480.6 408.5" stroke="#e6c700" stroke-width="2" fill="none"/>
<path d="M77.0 19.0 C85.2 27.3 112.2 55.3 126.0 69.0 C139.8 82.7 149.0 90.5 160.0 101.0 C171.0 111.5 179.7 121.0 192.0 132.0 C204.3 143.0 224.3 159.0 234.0 167.0 C243.7 175.0 241.2 172.7 250.0 180.0 C258.8 187.3 278.3 203.7 287.0 211.0 C295.7 218.3 293.8 216.8 302.0 224.0 C310.2 231.2 326.0 245.2 336.0 254.0 C346.0 262.8 354.7 270.5 362.0 277.0 C369.3 283.5 375.2 288.2 380.0 293.0 C384.8 297.8 384.5 299.8 391.0 306.0 C397.5 312.2 412.3 323.8 419.0 330.0 C425.7 336.2 425.8 337.8 431.0 343.0 C436.2 348.2 445.5 356.3 450.0 361.0 C454.5 365.7 454.8 367.2 458.0 371.0 C461.2 374.8 466.0 380.0 469.0 384.0 C472.0 388.0 474.1 391.1 476.0 395.0 C477.9 398.9 479.8 405.6 480.6 407.7" stroke="#e2c200" stroke-width="2" fill="none"/>
</svg><!--SCENE-END--></div>
  <!--SLIDERS-START--><div class="abs" style="left:554px;top:110px;width:3px;height:553px;background:#acacac;border-radius:1.500px"></div>
<div class="abs" style="left:594px;top:118px;width:3px;height:560px;background:#3d8cf6;border-radius:1.500px"></div>
<div class="abs knob" style="left:587.500px;top:109.500px"></div>
<div class="abs knob" style="left:547.500px;top:661px"></div>
<div class="abs il" style="left:552px;top:680px;letter-spacing:0.4px">0.20</div>
<div class="abs il" style="left:589.500px;top:680px;width:35.500px;overflow:hidden;letter-spacing:0.5px">115.00</div>
<div class="abs" style="left:554px;top:702px;width:13px;height:13px;background:#fff;border-radius:3px;box-shadow:0 0 0 0.500px #b0b0b0,0 0.500px 1px rgba(0,0,0,.3)"></div>
<div class="abs" style="left:572px;top:700px;font-size:13.500px;color:#111;white-space:nowrap">1 Layer</div>
<!--SLIDERS-END-->

  <!--RIGHT-START--><div class="abs lbl" style="left:613px;width:100px;top:111px">Print settings:</div>
<div class="abs lbl" style="left:613px;width:100px;top:140px">Filament:</div>
<div class="abs lbl" style="left:613px;width:100px;top:169px">Printer:</div>

<div class="abs combo" style="left:725px;top:107px;width:238px"><span class="abs" style="left:25px;top:0.6px">Rebel 0.2</span></div>
<div class="abs combo" style="left:725px;top:136px;width:238px"><span class="abs" style="left:25px;top:0.6px">Rebel PLA</span></div>
<div class="abs combo" style="left:725px;top:165px;width:238px"><span class="abs" style="left:25px;top:0.6px">Rebel II 0.4 S13</span></div>

<svg class="abs" style="left:730px;top:110px" width="16" height="16" viewBox="0 0 16 16"><path d="M6.8 0.8h2.4l.4 2 1.3.55 1.7-1.15 1.7 1.7-1.15 1.7.55 1.3 2 .4v2.4l-2 .4-.55 1.3 1.15 1.7-1.7 1.7-1.7-1.15-1.3.55-.4 2H6.800l-.4-2-1.3-.55-1.700 1.150-1.700-1.700 1.150-1.700-.55-1.300-2-.4V6.800l2-.4.55-1.300L1.700 3.400l1.700-1.700 1.700 1.150 1.300-.55z" fill="#cfcfcf" stroke="#8f8f8f" stroke-width="0.7" stroke-dasharray="1.4 0.5"/><circle cx="8" cy="8" r="2.7" fill="#f4f4f4" stroke="#9a9a9a" stroke-width="0.7"/></svg>
<div class="abs" style="left:730px;top:139px;width:16px;height:16px;background:#808000"></div>
<svg class="abs" style="left:730px;top:168px" width="16" height="16" viewBox="0 0 16 16"><rect x="3.6" y="2.6" width="8.8" height="3.6" rx="0.8" fill="#e2e2e2" stroke="#5a5a5a" stroke-width="0.9"/><rect x="0.7" y="5.3" width="14.6" height="8.2" rx="2.2" fill="#ececec" stroke="#444" stroke-width="1"/><rect x="2.8" y="7" width="10.4" height="4.6" rx="0.6" fill="#d0d0d0" stroke="#8a8a8a" stroke-width="0.6"/><path d="M3 8.400h10M3 9.800h10" stroke="#a8a8a8" stroke-width="0.7"/><rect x="3" y="11.300" width="10" height="1.700" fill="#9a9a9a"/></svg>

<div class="abs dd" style="left:966.5px;top:107.500px"><svg class="abs" style="left:5px;top:6px" width="10" height="8" viewBox="0 0 10 8"><path d="M1.5 2 L5 5.500 L8.500 2" fill="none" stroke="#222" stroke-width="1.5" stroke-linecap="round" stroke-linejoin="round"/></svg></div>
<div class="abs dd" style="left:966.5px;top:136.500px"><svg class="abs" style="left:5px;top:6px" width="10" height="8" viewBox="0 0 10 8"><path d="M1.5 2 L5 5.500 L8.500 2" fill="none" stroke="#222" stroke-width="1.5" stroke-linecap="round" stroke-linejoin="round"/></svg></div>
<div class="abs dd" style="left:966.5px;top:165.500px"><svg class="abs" style="left:5px;top:6px" width="10" height="8" viewBox="0 0 10 8"><path d="M1.5 2 L5 5.500 L8.500 2" fill="none" stroke="#222" stroke-width="1.5" stroke-linecap="round" stroke-linejoin="round"/></svg></div>

<div class="abs btn" style="left:741px;top:193px;width:108px"><span class="abs" style="left:24px;top:0">Export STL...</span>
<svg class="abs" style="left:5px;top:3px" width="17" height="17" viewBox="0 0 17 17"><g opacity="0.85"><path d="M0.5 4.600 L7.500 1 L14.500 4.600 L14.500 10.500 L7.500 14.300 L0.500 10.500 Z" fill="#f0f0f0" stroke="#9c9c9c" stroke-width="0.7"/><path d="M7.500 8.200 L14.500 4.600 L14.500 10.500 L7.500 14.300 Z" fill="#cccccc"/><ellipse cx="7.500" cy="1.800" rx="2.200" ry="1.200" fill="#fdfdfd" stroke="#a8a8a8" stroke-width="0.5"/><ellipse cx="4" cy="3.700" rx="2.200" ry="1.200" fill="#fdfdfd" stroke="#a8a8a8" stroke-width="0.5"/><ellipse cx="11" cy="3.700" rx="2.200" ry="1.200" fill="#fdfdfd" stroke="#a8a8a8" stroke-width="0.5"/><ellipse cx="7.500" cy="5.600" rx="2.200" ry="1.200" fill="#fdfdfd" stroke="#a8a8a8" stroke-width="0.5"/></g><path d="M7 9.300 h4.500 v-2.300 l5 4.200 l-5 4.200 v-2.300 h-4.500 z" fill="#5cb848" stroke="#2f8a25" stroke-width="0.8" stroke-linejoin="round"/></svg></div>
<div class="abs btn" style="left:854.5px;top:193px;width:131px"><span class="abs" style="left:24.500px;top:0">Export G-code...</span>
<svg class="abs" style="left:4.500px;top:3px" width="17" height="17" viewBox="0 0 17 17"><path d="M6.800 0.800h2.400l.4 2 1.300.55 1.700-1.150 1.700 1.700-1.150 1.700.55 1.300 2 .4v2.400l-2 .4-.55 1.300 1.150 1.700-1.700 1.700-1.700-1.150-1.300.55-.4 2H6.800l-.4-2-1.300-.55-1.700 1.150-1.700-1.700 1.150-1.700-.55-1.300-2-.4V6.800l2-.4.55-1.300L1.700 3.400l1.700-1.700 1.700 1.150 1.300-.55z" fill="#cfcfcf" stroke="#8f8f8f" stroke-width="0.7" stroke-dasharray="1.400 0.500"/><circle cx="8" cy="8" r="2.700" fill="#f4f4f4" stroke="#9a9a9a" stroke-width="0.7"/><path d="M7 9.300 h4.500 v-2.300 l5 4.200 l-5 4.200 v-2.300 h-4.500 z" fill="#5cb848" stroke="#2f8a25" stroke-width="0.8" stroke-linejoin="round"/></svg></div>

<div id="list" class="abs">
  <div class="abs" style="left:0;top:0;width:348px;height:17px;background:linear-gradient(#fbfbfb,#f0f0f0);border-bottom:1px solid #cfcfcf"></div>
  <div class="abs hd" style="left:5px;top:2px">Name</div>
  <div class="abs hd" style="left:147px;width:45px;top:2px;text-align:center">Copies</div>
  <div class="abs hd" style="left:192px;width:50px;top:2px;text-align:center">Scale</div>
  <div class="abs" style="left:145.5px;top:3px;width:1px;height:12px;background:#c2c2c2"></div>
  <div class="abs" style="left:191px;top:3px;width:1px;height:12px;background:#c2c2c2"></div>
  <div class="abs" style="left:242px;top:3px;width:1px;height:12px;background:#c2c2c2"></div>
  <div class="abs" style="left:1.5px;top:17px;width:240.5px;height:19px;background:#d4d4d4"></div>
  <div class="abs rw" style="left:1.500px;top:19px">Wing_panel_L.stl</div>
  <div class="abs rw" style="left:147px;width:35px;top:19px;text-align:center">1</div>
  <div class="abs rw" style="left:192px;width:42px;top:19px;text-align:center">100%</div>
</div>

<div class="abs il" style="left:651px;top:668px">Info</div>
<div id="info" class="abs"></div>
<div class="abs il" style="left:651px;top:690px">Size:</div>
<div class="abs il" style="left:651px;top:709px">Facets:</div>
<div class="abs il" style="left:651px;top:728px">Manifold:</div>
<div class="abs il" style="left:816.500px;top:690px">Volume:</div>
<div class="abs il" style="left:816.500px;top:709px">Materials:</div>
<!--RIGHT-END-->

  <div id="viewtabs" class="abs">
    <div class="abs vt" style="left:0;width:41px;border-left:none">3D</div>
    <div class="abs vt" style="left:41px;width:39px">2D</div>
    <div class="abs vt" style="left:80px;width:71px;background:linear-gradient(#65a9fb,#1a6ffb);color:#fff;border-left:none">Preview</div>
    <div class="abs vt" style="left:151px;width:63.5px;border-left:none">Layers</div>
  </div>

  <div id="status" class="abs"></div>
</div>
</body>
</html>
